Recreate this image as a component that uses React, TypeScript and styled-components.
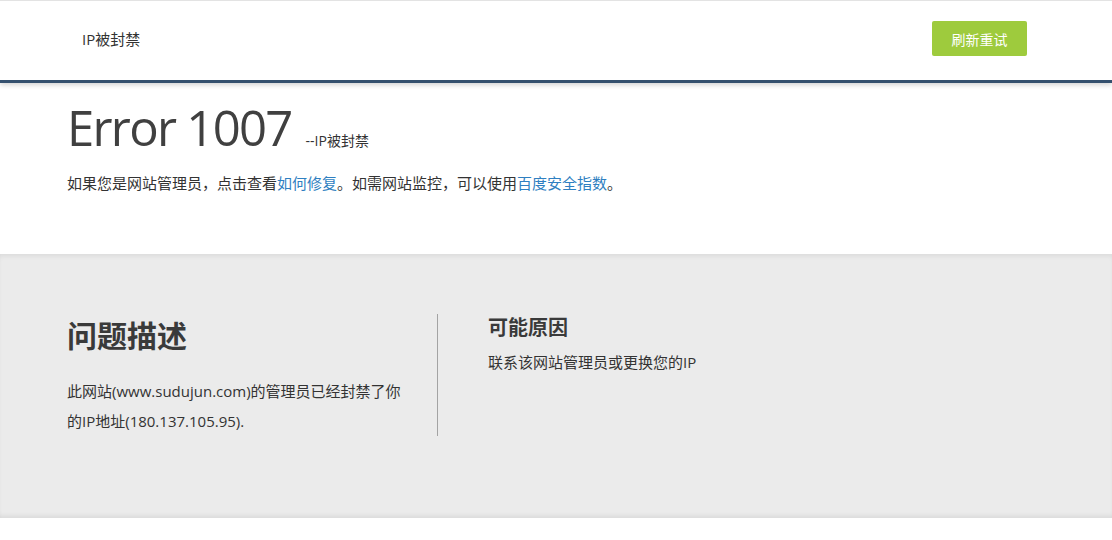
import React from 'react';
import styled, {createGlobalStyle} from "styled-components";

const GlobalStyle = createGlobalStyle`
  html, body {
    margin: 0;
    padding: 0;
    background: #fff;
  }
  body {
    font-family: "Open Sans", "Noto Sans CJK SC", sans-serif;
    font-size: 15px;
    color: #333;
  }
`

const Header = styled.header`
  position: relative;
  z-index: 1;
  display: flex;
  align-items: center;
  justify-content: space-between;
  height: 75px;
  padding: 0 85px 4px 82px;
  border-top: 1px solid #e3e3e3;
  border-bottom: 3px solid #34506e;
  box-shadow: 0 2px 5px rgba(0, 0, 0, .18);
  background: #fff;
`

const HeaderTitle = styled.span`
  font-size: 15px;
  color: #333;
`

const RetryButton = styled.button`
  width: 95px;
  height: 35px;
  border: none;
  border-radius: 2px;
  background: #9ecb3d;
  color: #fff;
  font-family: inherit;
  font-size: 14px;
  cursor: pointer;
`

const Intro = styled.section`
  height: 171px;
  padding: 12px 67px 0;
  box-sizing: border-box;
`

const TitleRow = styled.div`
  display: flex;
  align-items: baseline;
  gap: 14px;
`

const ErrorCode = styled.h1`
  margin: 0;
  font-size: 49px;
  font-weight: 400;
  letter-spacing: -1.7px;
  line-height: 64px;
  color: #404040;
`

const ErrorName = styled.span`
  font-size: 14px;
  color: #333;
`

const Note = styled.p`
  margin: 13px 0 0;
  line-height: 22px;
`

const Link = styled.a`
  color: #2f7fc1;
  text-decoration: none;
`

const Details = styled.section`
  display: flex;
  height: 264px;
  box-sizing: border-box;
  padding: 60px 67px 0;
  background: #ebebeb;
  box-shadow: inset 0 4px 5px -2px rgba(0, 0, 0, .07), inset 0 -5px 5px -3px rgba(0, 0, 0, .08);
`

const Column = styled.div<{ divided?: boolean }>`
  box-sizing: border-box;
  ${({divided}) => divided
    ? 'width: 371px; padding-right: 26px; border-right: 1px solid #a3a3a3; align-self: flex-start;'
    : 'padding-left: 50px;'}
`

const BigHeading = styled.h2`
  margin: 0;
  font-size: 30px;
  line-height: 44px;
  font-weight: 700;
  color: #3a3a3a;
`

const SmallHeading = styled.h3`
  margin: 0;
  font-size: 20px;
  line-height: 28px;
  font-weight: 700;
  color: #3a3a3a;
`

const Text = styled.p<{ tall?: boolean }>`
  margin: ${({tall}) => tall ? '18px 0 0' : '8px 0 0'};
  line-height: ${({tall}) => tall ? '30px' : '24px'};
  color: #333;
`

export default function App() {
	return (
		<>
			<GlobalStyle/>
			<Header>
				<HeaderTitle>IP被封禁</HeaderTitle>
				<RetryButton>刷新重试</RetryButton>
			</Header>
			<Intro>
				<TitleRow>
					<ErrorCode>Error 1007</ErrorCode>
					<ErrorName>--IP被封禁</ErrorName>
				</TitleRow>
				<Note>
					如果您是网站管理员，点击查看<Link href="#">如何修复</Link>。如需网站监控，可以使用<Link href="#">百度安全指数</Link>。
				</Note>
			</Intro>
			<Details>
				<Column divided>
					<BigHeading>问题描述</BigHeading>
					<Text tall>此网站(www.sudujun.com)的管理员已经封禁了你的IP地址(180.137.105.95).</Text>
				</Column>
				<Column>
					<SmallHeading>可能原因</SmallHeading>
					<Text>联系该网站管理员或更换您的IP</Text>
				</Column>
			</Details>
		</>
	);
}
